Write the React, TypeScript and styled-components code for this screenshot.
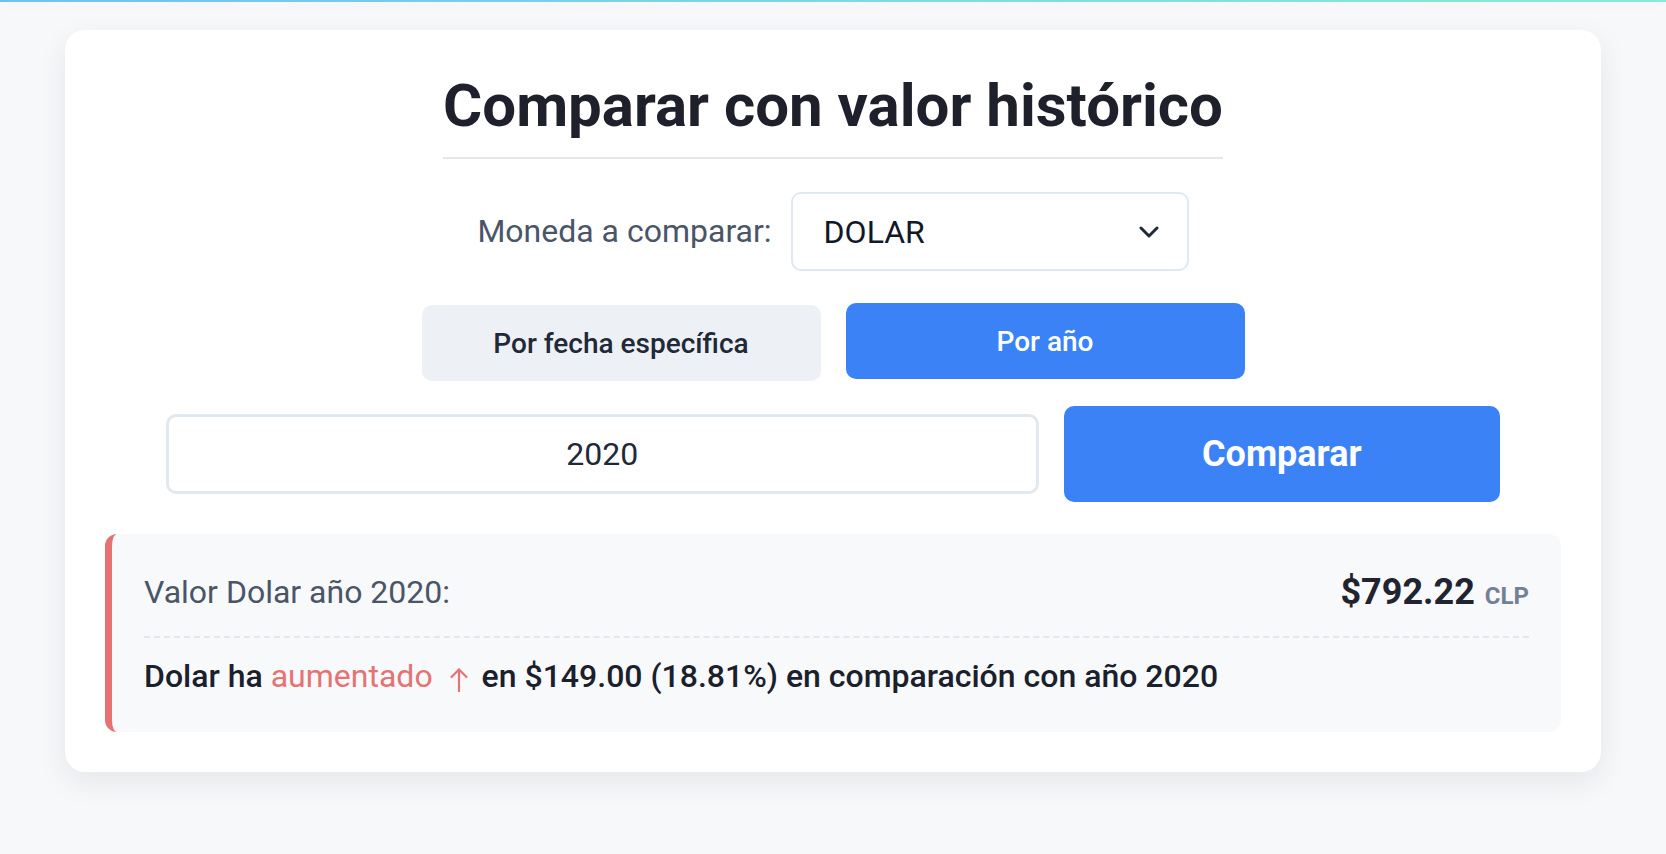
import React from "react";
import styled, { createGlobalStyle } from "styled-components";

const GlobalStyle = createGlobalStyle`
  * { box-sizing: border-box; }
  html, body { margin: 0; padding: 0; }
  body {
    background: #f7f8fa;
    font-family: Roboto, "Liberation Sans", Arial, sans-serif;
    color: #1f2937;
  }
`;

const TopBar = styled.div`
  height: 2px;
  background: linear-gradient(90deg, #72c0f0 0%, #7fd6e6 50%, #8ce9d4 100%);
  box-shadow: 0 2px 18px rgba(0, 0, 0, 0.07);
`;

const Page = styled.main`
  padding: 28px 65px 80px;
`;

const Card = styled.section`
  background: #ffffff;
  border-radius: 20px;
  box-shadow: 0 10px 30px rgba(15, 23, 42, 0.08);
  padding: 40px;
  display: flex;
  flex-direction: column;
  align-items: center;
`;

const Title = styled.h2`
  margin: 0;
  font-size: 60px;
  line-height: 1.2;
  font-weight: 700;
  color: #1e212b;
  padding-bottom: 15px;
  border-bottom: 2px solid #e5e7eb;
`;

const SelectRow = styled.div`
  margin-top: 33px;
  display: flex;
  align-items: center;
  gap: 19px;
`;

const Label = styled.span`
  font-size: 32px;
  line-height: 1.15;
  color: #4a5568;
`;

const SelectBox = styled.div`
  width: 398px;
  height: 79px;
  border: 2px solid #e2e8f0;
  border-radius: 10px;
  padding: 0 28px 0 31px;
  display: flex;
  align-items: center;
  justify-content: space-between;
  font-size: 32px;
  color: #111827;
  background: #fff;
`;

const ToggleRow = styled.div`
  margin-top: 34px;
  display: grid;
  grid-template-columns: 399px 399px;
  gap: 25px;
`;

const ToggleButton = styled.button<{ $active?: boolean }>`
  height: 76px;
  border: none;
  border-radius: 10px;
  font-family: inherit;
  font-size: 28px;
  font-weight: 500;
  cursor: pointer;
  background: ${(p) => (p.$active ? "#3b82f6" : "#edf1f6")};
  color: ${(p) => (p.$active ? "#ffffff" : "#1f2937")};
  transform: ${(p) => (p.$active ? "translateY(-2px)" : "none")};
`;

const CompareRow = styled.div`
  margin-top: 25px;
  align-self: stretch;
  margin-left: 61px;
  margin-right: 61px;
  display: grid;
  grid-template-columns: 2fr 1fr;
  gap: 25px;
  align-items: center;
`;

const YearInput = styled.input`
  height: 80px;
  width: 100%;
  border: 3px solid #e2e8f0;
  border-radius: 10px;
  text-align: center;
  font-family: inherit;
  font-size: 32px;
  color: #1f2937;
  background: #fff;
  outline: none;
`;

const CompareButton = styled.button`
  height: 96px;
  border: none;
  border-radius: 10px;
  background: #3b82f6;
  color: #ffffff;
  font-family: inherit;
  font-size: 36px;
  font-weight: 700;
  cursor: pointer;
`;

const ResultBox = styled.div`
  margin-top: 32px;
  align-self: stretch;
  background: #f8f9fb;
  border-left: 7px solid #e57373;
  border-radius: 12px;
  padding: 37px 32px 37px 32px;
`;

const ResultRow = styled.div`
  display: flex;
  justify-content: space-between;
  align-items: center;
`;

const ResultLabel = styled.span`
  font-size: 32px;
  line-height: 1.15;
  color: #4a5568;
`;

const Amount = styled.span`
  font-size: 36px;
  line-height: 1.2;
  font-weight: 700;
  color: #1f2430;
`;

const Currency = styled.span`
  font-size: 24px;
  font-weight: 700;
  color: #718096;
  margin-left: 10px;
`;

const Divider = styled.div`
  margin: 22px 0 20px;
  border-top: 2px dashed #e2e8f0;
`;

const ChangeLine = styled.p`
  margin: 0;
  font-size: 32px;
  line-height: 1.15;
  font-weight: 500;
  color: #1a202c;
`;

const Highlight = styled.span`
  color: #e57373;
  font-weight: 400;
`;

const ArrowIcon = styled.svg`
  width: 20px;
  height: 25px;
  margin: 0 5px 0 16px;
  vertical-align: -5px;
`;

const Chevron = () => (
  <svg width="20" height="12" viewBox="0 0 20 12" fill="none">
    <polyline
      points="2,2 10,10 18,2"
      stroke="#1f2937"
      strokeWidth="3"
      strokeLinecap="round"
      strokeLinejoin="round"
    />
  </svg>
);

const UpArrow = () => (
  <ArrowIcon viewBox="0 0 20 25" fill="none">
    <polyline
      points="2.5,10 10,2.5 17.5,10"
      stroke="#e57373"
      strokeWidth="2.2"
      strokeLinecap="round"
      strokeLinejoin="round"
    />
    <line x1="10" y1="2.5" x2="10" y2="24" stroke="#e57373" strokeWidth="2.2" strokeLinecap="round" />
  </ArrowIcon>
);

export default function App() {
  return (
    <>
      <GlobalStyle />
      <TopBar />
      <Page>
        <Card>
          <Title>Comparar con valor histórico</Title>
          <SelectRow>
            <Label>Moneda a comparar:</Label>
            <SelectBox>
              <span>DOLAR</span>
              <Chevron />
            </SelectBox>
          </SelectRow>
          <ToggleRow>
            <ToggleButton>Por fecha específica</ToggleButton>
            <ToggleButton $active>Por año</ToggleButton>
          </ToggleRow>
          <CompareRow>
            <YearInput defaultValue="2020" />
            <CompareButton>Comparar</CompareButton>
          </CompareRow>
          <ResultBox>
            <ResultRow>
              <ResultLabel>Valor Dolar año 2020:</ResultLabel>
              <span>
                <Amount>$792.22</Amount>
                <Currency>CLP</Currency>
              </span>
            </ResultRow>
            <Divider />
            <ChangeLine>
              Dolar ha <Highlight>aumentado<UpArrow /></Highlight> en $149.00 (18.81%) en comparación con año 2020
            </ChangeLine>
          </ResultBox>
        </Card>
      </Page>
    </>
  );
}
